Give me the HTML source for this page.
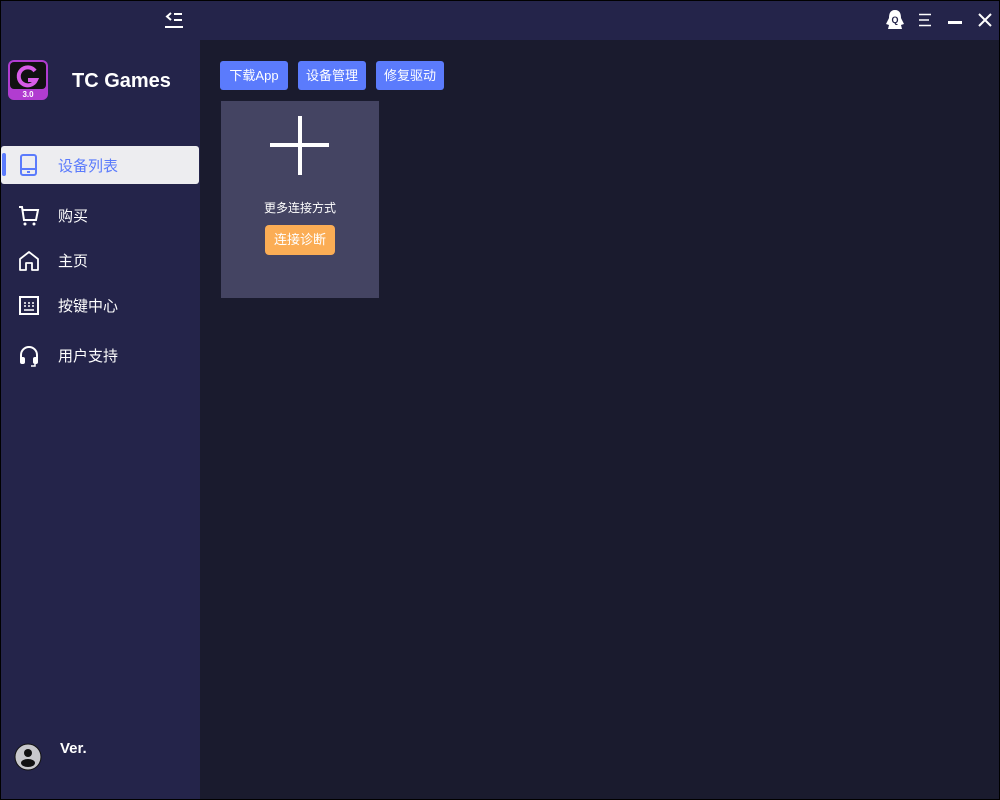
<!DOCTYPE html>
<html><head><meta charset="utf-8"><style>
*{margin:0;padding:0;box-sizing:border-box}
body{width:1000px;height:800px;background:#000;font-family:"Liberation Sans","Noto Sans CJK SC",sans-serif;position:relative;overflow:hidden}
.a{position:absolute}
#side{left:1px;top:1px;width:998px;height:798px;background:#24244a}
#main{left:200px;top:40px;width:799px;height:759px;background:#1a1b2e}
.btn{position:absolute;top:61px;height:29px;width:68px;background:#5b7bfc;border-radius:3px;color:#fff;font-size:13px;line-height:29px;text-align:center}
.nav{position:absolute;left:58px;color:#fff;font-size:15px}
.ic{position:absolute;left:18px}
</style></head><body>
<div class="a" id="side"></div>
<div class="a" id="main"></div>
<svg class="a" style="left:164px;top:11px" width="20" height="18" viewBox="0 0 20 18"><path d="M7 2L3 5.5 7 9" stroke="#fff" stroke-width="2" fill="none"/><path d="M10 3h8M10 9h8M1 16h18" stroke="#fff" stroke-width="2"/></svg>
<svg class="a" style="left:885px;top:9px" width="20" height="22" viewBox="0 0 20 22"><path d="M10 1C5 1 4 5 4 9L1 15 4 16 3 20 17 20 16 16 19 15 16 9C16 5 15 1 10 1Z" fill="#fff"/><text x="10" y="14" font-size="9" font-weight="bold" text-anchor="middle" fill="#24244a" font-family="Liberation Sans">Q</text></svg>
<svg class="a" style="left:918px;top:13px" width="14" height="14"><path d="M1 1.5h12M1 7h10M1 12.5h12" stroke="#fff" stroke-width="1.5"/></svg>
<div class="a" style="left:948px;top:21px;width:14px;height:3px;background:#fff"></div>
<svg class="a" style="left:978px;top:13px" width="14" height="14"><path d="M1 1L13 13M13 1L1 13" stroke="#fff" stroke-width="2"/></svg>
<svg class="a" style="left:8px;top:60px" width="40" height="40" viewBox="0 0 40 40"><rect width="40" height="40" rx="6" fill="#b13cd0"/><rect x="2" y="2" width="36" height="27" rx="4" fill="#111"/><path d="M27 11A9 9 0 1 0 28 20H20" stroke="#d85ce8" stroke-width="4" fill="none"/><text x="20" y="37" font-size="8" font-weight="bold" fill="#fff" text-anchor="middle" font-family="Liberation Sans">3.0</text></svg>
<div class="a" style="left:72px;top:70px;color:#fff;font-size:20px;font-weight:bold">TC Games</div>
<div class="a" style="left:1px;top:146px;width:198px;height:38px;background:#ededf0;border-radius:3px"></div>
<div class="a" style="left:2px;top:153px;width:4px;height:23px;background:#5b7bfc;border-radius:2px"></div>
<svg class="ic" style="top:154px" width="22" height="22"><rect x="3" y="1" width="15" height="20" rx="2" stroke="#5b7bfc" stroke-width="2" fill="none"/><path d="M3 15h15" stroke="#5b7bfc" stroke-width="2"/><rect x="9" y="17" width="3" height="2" fill="#5b7bfc"/></svg>
<div class="nav" style="top:155px;color:#5b7bfc">设备列表</div>
<svg class="ic" style="top:205px" width="22" height="22"><path d="M1 2h3l2 13h12l2-10H5" stroke="#fff" stroke-width="2" fill="none"/><circle cx="7" cy="19" r="1.5" fill="#fff"/><circle cx="16" cy="19" r="1.5" fill="#fff"/></svg>
<div class="nav" style="top:205px">购买</div>
<svg class="ic" style="top:250px" width="22" height="22"><path d="M2 20V9L11 2 20 9V20H14V13H8V20Z" stroke="#fff" stroke-width="1.8" fill="none" stroke-linejoin="round"/></svg>
<div class="nav" style="top:250px">主页</div>
<svg class="ic" style="top:295px" width="22" height="22"><rect x="2" y="2" width="18" height="17" stroke="#fff" stroke-width="2" fill="none"/><path d="M6 8h2M10 8h2M14 8h2M6 11h2M10 11h2M14 11h2M6 15h10" stroke="#fff" stroke-width="1.5"/></svg>
<div class="nav" style="top:295px">按键中心</div>
<svg class="ic" style="top:345px" width="22" height="22"><path d="M3 14V10a8 8 0 0 1 16 0v4" stroke="#fff" stroke-width="2" fill="none"/><rect x="2" y="12" width="5" height="7" rx="2" fill="#fff"/><rect x="15" y="12" width="5" height="7" rx="2" fill="#fff"/><path d="M17 19v2h-4" stroke="#fff" stroke-width="1.5" fill="none"/></svg>
<div class="nav" style="top:345px">用户支持</div>
<svg class="a" style="left:14px;top:743px" width="28" height="28"><circle cx="14" cy="14" r="13" fill="#c8c8cc" stroke="#111" stroke-width="1"/><circle cx="14" cy="10" r="4" fill="#111"/><ellipse cx="14" cy="20" rx="7" ry="4" fill="#111"/></svg>
<div class="a" style="left:60px;top:740px;color:#fff;font-size:15px;font-weight:bold">Ver.</div>
<div class="btn" style="left:220px">下载App</div>
<div class="btn" style="left:298px">设备管理</div>
<div class="btn" style="left:376px">修复驱动</div>
<div class="a" style="left:221px;top:101px;width:158px;height:197px;background:#444462"></div>
<div class="a" style="left:270px;top:143px;width:59px;height:4px;background:#fff"></div>
<div class="a" style="left:298px;top:116px;width:4px;height:59px;background:#fff"></div>
<div class="a" style="left:221px;top:199px;width:158px;text-align:center;color:#fff;font-size:12px">更多连接方式</div>
<div class="a" style="left:265px;top:225px;width:70px;height:30px;background:#fbad55;border-radius:4px;color:#fff;font-size:13px;line-height:30px;text-align:center">连接诊断</div>
</body></html>
